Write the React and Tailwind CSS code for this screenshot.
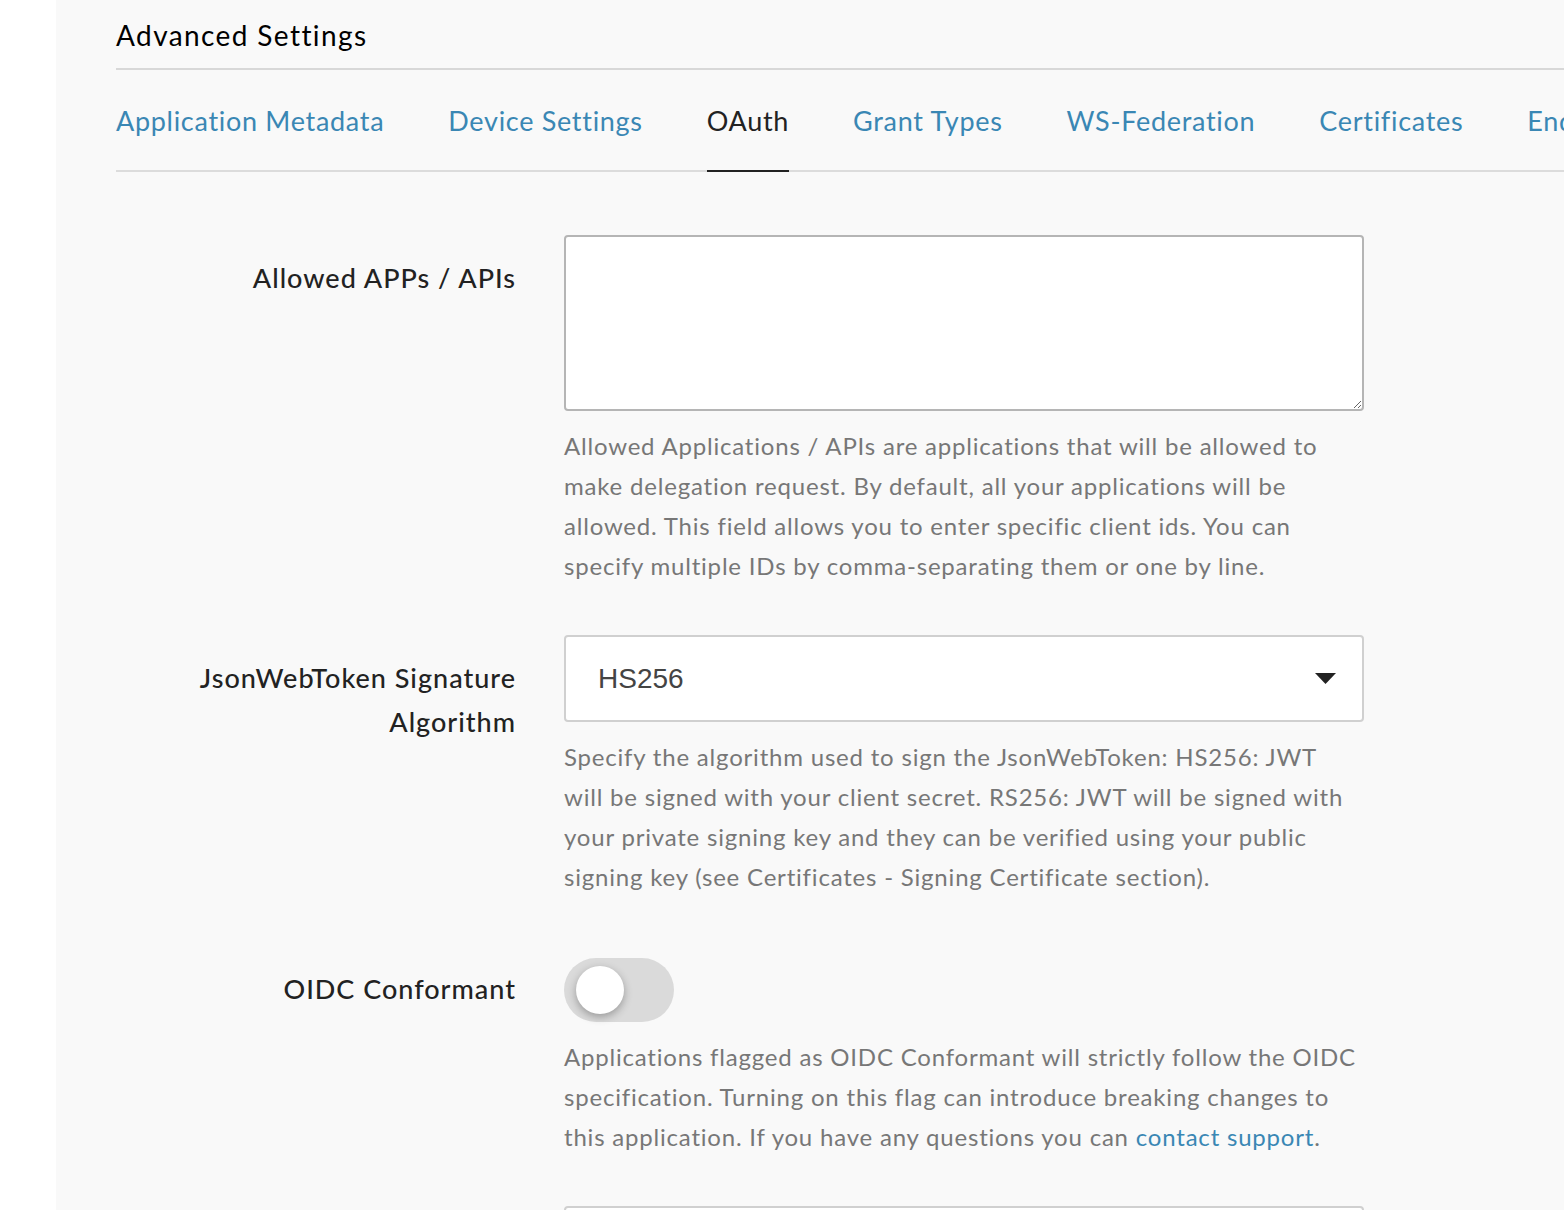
import { useState } from 'react';

const tabs = [
  'Application Metadata',
  'Device Settings',
  'OAuth',
  'Grant Types',
  'WS-Federation',
  'Certificates',
  'Endpoints',
];

function HelpText({ children }) {
  return (
    <p className="mt-[15px] text-[24px] leading-[40px] text-[#777777] tracking-[0.8px] whitespace-nowrap">
      {children}
    </p>
  );
}

function FormRow({ label, children }) {
  return (
    <div className="flex mb-[49px]">
      <label className="w-[400px] shrink-0 text-right text-[27px] leading-[44px] font-medium text-[#222222] tracking-[1px] pt-[21px]">
        {label}
      </label>
      <div className="ml-[48px] w-[800px] shrink-0">{children}</div>
    </div>
  );
}

export default function App() {
  const [oidc, setOidc] = useState(false);

  return (
    <div
      className="min-h-screen flex bg-white overflow-hidden"
      style={{ fontFamily: 'Lato, "Noto Sans", sans-serif' }}
    >
      <div className="w-[56px] shrink-0 bg-white" />
      <div className="flex-1 bg-[#f9f9f9] pl-[60px] min-w-0">
        <h2 className="pt-[17px] pb-[15px] text-[28px] leading-[36px] text-black tracking-[1.4px] border-b-2 border-[#d8d8d8]">
          Advanced Settings
        </h2>

        <div className="flex gap-[64px] border-b-2 border-[#dcdcdc] whitespace-nowrap">
          {tabs.map((t) => (
            <div
              key={t}
              className={
                t === 'OAuth'
                  ? 'pt-[31px] pb-[29px] text-[27px] leading-[40px] tracking-[0.7px] text-[#222222] border-b-2 border-[#222222] -mb-[2px]'
                  : 'pt-[31px] pb-[29px] text-[27px] leading-[40px] tracking-[0.7px] text-[#3a87b4]'
              }
            >
              {t}
            </div>
          ))}
        </div>

        <div className="pt-[63px]">
          <FormRow label="Allowed APPs / APIs">
            <textarea className="block w-full h-[176px] bg-white border-2 border-[#b5b5b5] rounded-[4px] outline-none" />
            <HelpText>
              Allowed Applications / APIs are applications that will be allowed to
              <br />
              make delegation request. By default, all your applications will be
              <br />
              allowed. This field allows you to enter specific client ids. You can
              <br />
              specify multiple IDs by comma-separating them or one by line.
            </HelpText>
          </FormRow>

          <FormRow
            label={
              <>
                JsonWebToken Signature
                <br />
                Algorithm
              </>
            }
          >
            <div className="flex items-center justify-between h-[87px] bg-white border-2 border-[#d0d0d0] rounded-[4px] pl-[32px] pr-[26px]">
              <span
                className="text-[28px] text-[#444444]"
                style={{ fontFamily: '"Liberation Sans", Arial, sans-serif' }}
              >
                HS256
              </span>
              <svg width="21" height="11" viewBox="0 0 21 11">
                <path d="M0 0 L21 0 L10.5 11 Z" fill="#222222" />
              </svg>
            </div>
            <HelpText>
              Specify the algorithm used to sign the JsonWebToken: HS256: JWT
              <br />
              will be signed with your client secret. RS256: JWT will be signed with
              <br />
              your private signing key and they can be verified using your public
              <br />
              signing key (see Certificates - Signing Certificate section).
            </HelpText>
          </FormRow>

          <FormRow label="OIDC Conformant">
            <button
              type="button"
              onClick={() => setOidc(!oidc)}
              className={
                oidc
                  ? 'mt-[12px] relative block w-[110px] h-[64px] rounded-full bg-[#44c7f4]'
                  : 'mt-[12px] relative block w-[110px] h-[64px] rounded-full bg-[#dadada]'
              }
            >
              <span
                className={
                  oidc
                    ? 'absolute top-[8px] left-[50px] w-[48px] h-[48px] rounded-full bg-white shadow-[0_3px_8px_rgba(0,0,0,0.3)]'
                    : 'absolute top-[8px] left-[12px] w-[48px] h-[48px] rounded-full bg-white shadow-[0_3px_8px_rgba(0,0,0,0.3)]'
                }
              />
            </button>
            <HelpText>
              Applications flagged as OIDC Conformant will strictly follow the OIDC
              <br />
              specification. Turning on this flag can introduce breaking changes to
              <br />
              this application. If you have any questions you can{' '}
              <a href="#" className="text-[#3a87b4]">
                contact support
              </a>
              .
            </HelpText>
          </FormRow>

          <FormRow label="">
            <div className="h-[87px] bg-white border-2 border-[#d0d0d0] rounded-[4px]" />
          </FormRow>
        </div>
      </div>
    </div>
  );
}
